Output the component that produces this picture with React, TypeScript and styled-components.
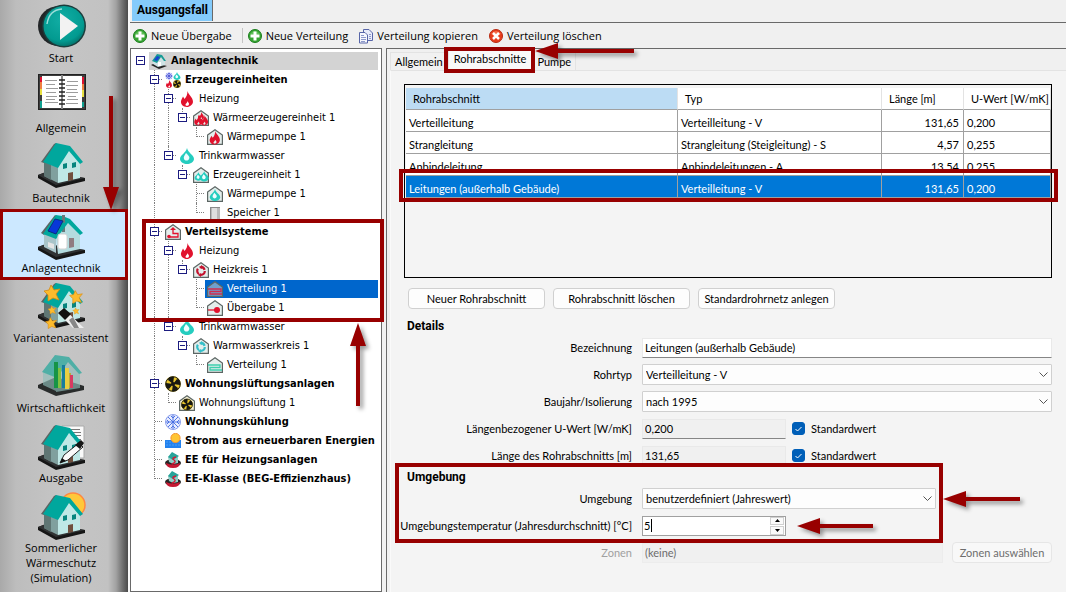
import React, { useState } from "react";
import styled, { createGlobalStyle, css } from "styled-components";

const RED = "#980000";
const TEAL = "#00a79d";
const UI = 'Lato, "Liberation Sans", Arial, sans-serif';
const HEADING = 'Roboto, "Liberation Sans", Arial, sans-serif';
const MENU = '"Open Sans", "Noto Sans", sans-serif';

const GlobalStyle = createGlobalStyle`
  * { box-sizing: border-box; }
  body { margin: 0; background: #f0f0f0; color: #000; font: 11px/15px ${UI}; }
  button, input, select { font: inherit; color: inherit; }
`;

const Shell = styled.div`
  display: flex;
  min-height: 100vh;
`;

/* ---------- navigation ---------- */

const Sidebar = styled.nav`
  position: relative;
  flex: 0 0 128px;
  background: linear-gradient(90deg, #a9a9a9 0, #bdbdbd 16px, #c5c5c5 60px, #c2c2c2 108px, #a2a2a2 116px, #6c6c6c 123px, #4a4a4a 128px);
`;

const NavButton = styled.button<{ $active?: boolean }>`
  display: flex;
  flex-direction: column;
  align-items: center;
  width: 100%;
  min-height: 70px;
  padding: 2px 6px 5px 0;
  border: 0;
  background: ${(p) => (p.$active ? "#cce8ff" : "transparent")};
  font: 11px/15px ${MENU};
  white-space: pre-line;
`;

const NavIcon = styled.svg`
  flex: none;
  width: 48px;
  height: 48px;
  margin-left: 2px;
`;

const MainArea = styled.main`
  position: relative;
  display: flex;
  flex: 1;
  flex-direction: column;
  min-width: 0;
  border-left: 2px solid #f8f8f8;
`;

const CaseTabs = styled.div`
  display: flex;
  height: 23px;
  padding-left: 2px;
  border-bottom: 1px solid #696969;
`;

const CaseTab = styled.button`
  height: 21px;
  padding: 0 4px 0 5px;
  border: 0;
  border-right: 1px solid #696969;
  background: #84cbfb;
  font: bold 12px/21px ${HEADING};
`;

const Toolbar = styled.div`
  display: flex;
  align-items: center;
  height: 25px;
  padding-left: 2px;
`;

const ToolButton = styled.button`
  display: flex;
  align-items: center;
  gap: 3px;
  padding: 0;
  margin-right: 10px;
  border: 0;
  background: none;
  font: 11px/16px ${MENU};
  white-space: nowrap;
`;

const ToolDivider = styled.span`
  width: 1px;
  height: 15px;
  margin-right: 4px;
  background: #c4c4c4;
`;

const Panes = styled.div`
  display: flex;
  flex: 1;
  gap: 4px;
`;

/* ---------- tree ---------- */

const TreePane = styled.section`
  position: relative;
  flex: 0 0 252px;
  padding: 2px 3px 0 1px;
  border: 1px solid #696969;
  background: #fff;
`;

const TreeList = styled.ul`
  margin: 0;
  padding: 0;
  list-style: none;
`;

const TreeRow = styled.li`
  display: flex;
  align-items: center;
  height: 19px;
  padding-left: 4px;
`;

const Guide = styled.span<{ $kind: "none" | "line" | "tee" | "elbow" }>`
  position: relative;
  flex: 0 0 14px;
  height: 19px;
  &::before {
    content: "";
    position: absolute;
    left: 4px;
    top: 0;
    height: ${(p) => (p.$kind === "elbow" ? "10px" : "19px")};
    border-left: ${(p) => (p.$kind === "none" ? "0" : "1px dotted #808080")};
  }
  &::after {
    content: "";
    position: absolute;
    left: 5px;
    top: 9px;
    width: 7px;
    border-top: ${(p) => (p.$kind === "tee" || p.$kind === "elbow" ? "1px dotted #808080" : "0")};
  }
`;

const Expander = styled.button`
  position: absolute;
  z-index: 1;
  left: 0;
  top: 5px;
  width: 9px;
  height: 9px;
  padding: 0;
  border: 1px solid #1c1c80;
  background: #fff;
  &::after {
    content: "";
    position: absolute;
    left: 1px;
    top: 3px;
    width: 5px;
    height: 1px;
    background: #1c1c80;
  }
`;

const NodeBody = styled.span<{ $tone?: "root" | "selected" }>`
  display: flex;
  flex: 1;
  align-items: center;
  gap: 4px;
  height: 18px;
  margin-left: -1px;
  padding-left: 2px;
  ${(p) => p.$tone === "root" && css`background: #d3d3d3;`}
  ${(p) => p.$tone === "selected" && css`background: #0066cc; color: #fff;`}
`;

const NodeLabel = styled.span<{ $bold?: boolean }>`
  font: ${(p) => (p.$bold ? "bold" : "normal")} 11px/18px "DejaVu Sans Condensed", "DejaVu Sans", sans-serif;
  white-space: nowrap;
`;

const SmallIcon = styled.svg`
  flex: none;
  width: 16px;
  height: 16px;
`;

/* ---------- detail pane ---------- */

const DetailPane = styled.section`
  flex: 1;
  min-width: 0;
  padding: 2px 0 0 3px;
  border-top: 1px solid #696969;
  border-left: 1px solid #696969;
`;

const TabStrip = styled.div`
  position: relative;
  display: flex;
  align-items: flex-end;
  height: 19px;
`;

const Tab = styled.button<{ $active?: boolean }>`
  height: ${(p) => (p.$active ? "21px" : "18px")};
  padding: ${(p) => (p.$active ? "0 5px 4px" : "0 4px 1px")};
  border: 1px solid #e3e3e3;
  border-bottom: 0;
  background: ${(p) => (p.$active ? "#f9f9f9" : "#f1f1f1")};
  line-height: 15px;
`;

const TabBody = styled.div`
  min-height: 100%;
  padding: 13px 14px 0 13px;
  border-top: 1px solid #e3e3e3;
  border-left: 1px solid #fafafa;
  background: #f4f4f4;
`;

const TableBox = styled.div`
  position: relative;
  height: 194px;
  padding: 3px 0 0 1px;
  border: 1px solid #000;
`;

const PipeTable = styled.table`
  width: 100%;
  table-layout: fixed;
  border-collapse: separate;
  border-spacing: 0;
`;

const HeadCell = styled.th<{ $sorted?: boolean; $w?: number }>`
  width: ${(p) => (p.$w ? `${p.$w}px` : "auto")};
  height: 22px;
  padding: 0 0 1px 7px;
  border-right: 1px solid #e3e3e3;
  border-bottom: 1px solid #a0a0a0;
  background: ${(p) => (p.$sorted ? "#bcdcf4" : "#fff")};
  font-weight: normal;
  text-align: left;
  white-space: nowrap;
`;

const Cell = styled.td<{ $right?: boolean; $selected?: boolean }>`
  height: 22px;
  padding: 4px 4px 0 3px;
  border-right: 1px solid #a0a0a0;
  border-bottom: 1px solid #a0a0a0;
  background: ${(p) => (p.$selected ? "#0078d7" : "#fff")};
  color: ${(p) => (p.$selected ? "#fff" : "#000")};
  text-align: ${(p) => (p.$right ? "right" : "left")};
  white-space: nowrap;
`;

const ButtonBar = styled.div`
  display: flex;
  gap: 8px;
  padding: 10px 4px 0;
`;

const PushButton = styled.button<{ $w: number }>`
  flex: 0 0 ${(p) => p.$w}px;
  height: 21px;
  padding: 0;
  border: 1px solid #d0d0d0;
  border-radius: 4px;
  background: #fdfdfd;
  line-height: 17px;
  white-space: nowrap;
  &:disabled { color: #6d6d6d; border-color: #e6e6e6; background: #f8f8f8; }
`;

const Group = styled.section<{ $gap: number }>`
  position: relative;
  padding-top: ${(p) => p.$gap}px;
`;

const GroupTitle = styled.h2`
  margin: 0 0 1px 3px;
  font: bold 12px/14px ${HEADING};
`;

const FormRow = styled.div`
  display: grid;
  grid-template-columns: 228px minmax(0, 1fr);
  column-gap: 10px;
  align-items: center;
  height: 27px;
`;

const FormLabel = styled.label<{ $dim?: boolean }>`
  justify-self: end;
  color: ${(p) => (p.$dim ? "#a0a0a0" : "#000")};
  white-space: nowrap;
`;

const FieldSlot = styled.div`
  display: flex;
  align-items: center;
`;

const TextInput = styled.input<{ $w?: number }>`
  flex: ${(p) => (p.$w ? `0 0 ${p.$w}px` : "1")};
  min-width: 0;
  height: 20px;
  padding: 0 2px 1px;
  border: 1px solid #e9e9e9;
  border-bottom-color: #868686;
  background: #fff;
  outline: 0;
  &:read-only { background: #f0f0f0; }
  &:disabled { background: #f0f0f0; color: #6d6d6d; border-color: #ececec; }
`;

const SelectWrap = styled.div<{ $inset?: boolean }>`
  position: relative;
  flex: 1;
  margin-right: ${(p) => (p.$inset ? "116px" : "0")};
`;

const Select = styled.select`
  display: block;
  width: 100%;
  height: 21px;
  padding: 0 3px;
  border: 1px solid #d0d0d0;
  border-radius: 1px;
  background: #fdfdfd;
  appearance: none;
  outline: 0;
`;

const Chevron = styled.svg`
  position: absolute;
  right: 4px;
  top: 8px;
  width: 9px;
  height: 6px;
  pointer-events: none;
`;

const CheckLabel = styled.label`
  position: relative;
  display: flex;
  align-items: center;
  gap: 6px;
  margin-left: 6px;
`;

const CheckBox = styled.input`
  width: 13px;
  height: 13px;
  margin: 0;
  border: 1px solid #868686;
  border-radius: 3px;
  appearance: none;
  &:checked { border-color: #005fb8; background: #005fb8; }
`;

const CheckMark = styled.svg`
  position: absolute;
  left: 3px;
  top: 5px;
  width: 7px;
  height: 6px;
  pointer-events: none;
`;

const Spinner = styled.div`
  position: relative;
  display: flex;
  width: 144px;
  height: 20px;
  padding: 0 1px;
  border: 1px solid #a0a0a0;
  background: #fff;
`;

const SpinInput = styled.input`
  flex: 1;
  min-width: 0;
  padding: 0 0 1px;
  border: 0;
  background: transparent;
  outline: 0;
`;

const Caret = styled.span`
  position: absolute;
  left: 8px;
  top: 2px;
  width: 1px;
  height: 13px;
  background: #000;
`;

const SpinButtons = styled.div`
  display: flex;
  flex-direction: column;
  width: 14px;
  gap: 1px;
`;

const SpinButton = styled.button`
  display: flex;
  flex: 1;
  align-items: center;
  justify-content: center;
  padding: 0;
  border: 1px solid #d0d0d0;
  background: #fafafa;
`;

/* ---------- callouts ---------- */

const Frame = styled.span<{ $t: number; $l: number; $r?: number; $w?: number; $h: number; $b?: number }>`
  position: absolute;
  z-index: 2;
  top: ${(p) => p.$t}px;
  left: ${(p) => p.$l}px;
  ${(p) => (p.$w ? `width: ${p.$w}px;` : `right: ${p.$r}px;`)}
  height: ${(p) => p.$h}px;
  border: ${(p) => p.$b ?? 4}px solid ${RED};
  pointer-events: none;
`;

const ArrowSvg = styled.svg<{ $x: number; $y: number }>`
  position: absolute;
  z-index: 3;
  left: ${(p) => p.$x}px;
  top: ${(p) => p.$y}px;
  overflow: visible;
  pointer-events: none;
  filter: drop-shadow(3px 3px 2px rgba(0, 0, 0, 0.4));
`;

type ArrowProps = { x: number; y: number; length: number; dir: "left" | "up" | "down" };

function Arrow({ x, y, length, dir }: ArrowProps) {
  const turn = { left: 0, up: 90, down: -90 }[dir];
  return (
    <ArrowSvg $x={x} $y={y} width="1" height="1" aria-hidden="true">
      <path transform={`rotate(${turn})`} fill={RED} d={`M0 0 23 -8V-2H${length}V2H23V8Z`} />
    </ArrowSvg>
  );
}

/* ---------- large icons ---------- */

const Base = () => (
  <>
    <path d="M0 33 8 30 47 36 47 39 18 46 0 36Z" fill="#161616" />
    <path d="M0 33 8 30 47 36 18 43Z" fill="#303233" />
  </>
);

function House() {
  return (
    <g>
      <Base />
      <path d="M6 19 20 25V41L6 34Z" fill="#80a09e" />
      <path d="M6 19 13 22V38L6 34Z" fill="#5f7674" />
      <path d="M20 25 30 8 42 21V36L20 41Z" fill="#bfe8e6" />
      <path d="M3 20 16 2 18 1 19 3 6 21Z" fill="#5c6463" />
      <path d="M5 20 18 1 32 4 45 20 42 22 31 9 20 26Z" fill={TEAL} />
      <path d="M25 22 29 21V26L25 27ZM34 21 38 20V25L34 26Z" fill="#06857e" />
      <path d="M30 31 35 30V38L30 39Z" fill="#70503f" />
    </g>
  );
}

const Star = ({ x, y, s }: { x: number; y: number; s: number }) => (
  <path
    transform={`translate(${x} ${y}) scale(${s})`}
    d="M-1-8 2-3 8-4 4 1 7 7 1 5-4 8-4 2-8-2-3-3Z"
    fill="#fdbb2d"
    stroke="#d88b10"
    strokeWidth=".8"
  />
);

const bigIcons: Record<string, React.ReactNode> = {
  start: (
    <>
      <defs>
        <radialGradient id="play" cx=".45" cy=".35" r=".7">
          <stop offset="0" stopColor="#12aea5" />
          <stop offset=".75" stopColor="#029a90" />
          <stop offset="1" stopColor="#046a64" />
        </radialGradient>
      </defs>
      <ellipse cx="21" cy="24" rx="21" ry="20" fill="#222527" />
      <ellipse cx="26" cy="24" rx="22" ry="21.500" fill="#1c3d3c" />
      <ellipse cx="26" cy="24" rx="20.500" ry="20" fill="url(#play)" />
      <path d="M9 22Q11 8 24 7" fill="none" stroke="#9addd9" strokeWidth="1.500" />
      <path d="M22 11V38L40 24Z" fill="#f2f2f2" />
    </>
  ),
  book: (
    <g transform="translate(0 2)">
      <rect x=".5" y=".5" width="47" height="35" fill="#3c3c3c" stroke="#222" />
      <path d="M2 3H4V8H2ZM44 3H46V10H44Z" fill="#e01030" />
      <path d="M2 8H4V15H2ZM44 10H46V16H44Z" fill="#f08040" />
      <path d="M2 15H4V21H2ZM44 16H46V23H44Z" fill="#e8e040" />
      <path d="M2 27H4V34H2ZM44 28H46V33H44Z" fill="#10a090" />
      <path d="M4 2H23V34H4ZM25 2H44V34H25Z" fill="#fff" />
      <path d="M7 6.500H19M8 10.500H17M8 14.500H20M8 18.500H18M8 22.500H19M8 25.500H17M7 28.500H20M29 7.500H40M28 11.500H40M29 15.500H39M28 18.500H40M30 22.500H38M29 25.500H40M28 29.500H40" stroke="#9c9c9c" />
      <path d="M24 1V35" stroke="#888" strokeWidth="2" />
      <path d="M21 6H27M21 10H27M21 14H27M21 18H27M21 22H27M21 26H27M21 30H27" stroke="#222" strokeWidth="1.500" />
    </g>
  ),
  house: <House />,
  plant: (
    <g transform="translate(0 2)">
      <Base />
      <path d="M6 18 18 24V39L6 33Z" fill="#a9c4c9" />
      <path d="M18 24 30 9 42 21V35L20 40Z" fill="#b4dcdf" />
      <path d="M24 1H27V18H24Z" fill="#69777a" />
      <path d="M31 24H36V33L31 34Z" fill="#8f7d80" />
      <path d="M10 28 16 30V35L10 33Z" fill="#e5e5e5" />
      <path d="M3 19 17 1 19 2 6 21Z" fill="#5c6463" />
      <path d="M5 20 18 1 24 2 24 8 27 9V3L32 5 45 19 42 21 30 9 18 25Z" fill={TEAL} />
      <path d="M10 17 17 5 25 7 18 20Z" fill="#0837d8" stroke="#07327a" />
      <rect x="20" y="20" width="9" height="15" rx="2" fill="#fff" stroke="#d1d1d1" />
    </g>
  ),
  wizard: (
    <>
      <House />
      <path d="M20 31 25 26 46 46H35Z" fill="#eee" />
      <path d="M20 31 26 26 33 32 27 38Z" fill="#111" />
      <path d="M31 38 35 35 41 46H36Z" fill="#888" />
      <Star x={14} y={11} s={1} />
      <Star x={38} y={15} s={0.8} />
      <Star x={14} y={28} s={0.5} />
      <Star x={38} y={29} s={0.4} />
      <Star x={13} y={41} s={0.7} />
    </>
  ),
  economy: (
    <>
      <path d="M0 33 18 25 46 34 46 38 18 44 0 36Z" fill="#292c2c" />
      <path d="M5 20 18 25V39L5 33ZM18 25 30 9 42 21V36L18 40Z" fill="#8fbdb8" opacity=".65" />
      <path d="M4 20 17 3 31 5 44 21 41 22 30 10 19 26Z" fill="#4fafa6" />
      <path d="M16 10H20V36H16Z" fill="#169447" />
      <path d="M20 16H23V36H20Z" fill="#7dc142" />
      <path d="M24 13H27V36H24Z" fill="#167e9c" />
      <path d="M27 16H31V37H27Z" fill="#e9cf42" />
      <path d="M31 21H33V36H31Z" fill="#bda838" />
      <path d="M32 23H35V36H32Z" fill="#d83b62" />
    </>
  ),
  report: (
    <>
      <path d="M24 4H46V36H24Z" fill="#fafafa" stroke="#aaa" />
      <path d="M27 7.500H42M27 10.500H43M30 13.500H43M34 17.500H43M36 21.500H43" stroke="#777" />
      <g transform="translate(0 2)"><House /></g>
      <path d="M22 41 26 33 41 21 45 25 30 38Z" fill="#fafafa" stroke="#222" />
      <path d="M37 23 43 18 46 21 42 27Z" fill="#151515" />
      <path d="M22 41 24 36 28 39Z" fill="#111" />
    </>
  ),
  summer: (
    <>
      <circle cx="35" cy="13" r="12" fill="#ffc83a" stroke="#ff8740" strokeWidth="1.500" />
      <g transform="translate(0 2)"><House /></g>
    </>
  ),
};

const navItems = [
  { icon: "start", label: "Start" },
  { icon: "book", label: "Allgemein" },
  { icon: "house", label: "Bautechnik" },
  { icon: "plant", label: "Anlagentechnik" },
  { icon: "wizard", label: "Variantenassistent" },
  { icon: "economy", label: "Wirtschaftlichkeit" },
  { icon: "report", label: "Ausgabe" },
  { icon: "summer", label: "Sommerlicher\nWärmeschutz\n(Simulation)" },
];

/* ---------- small icons ---------- */

const Hut = ({ fill = "#e4eeec" }: { fill?: string }) => (
  <path d="M.600 6 8 .800 15.400 6V15.400H.600Z" fill={fill} stroke="#5c6664" strokeWidth="1.200" />
);
const FLAME = "M8.500 0C9.500 4 14 6 14 11 13.500 14.500 10 16 8 16 4 16 1.500 13 2 10 2.500 8 3.500 7 4 5.500L5.500 8C7.500 6 8.500 3 8.500 0ZM8 10C9 12 6.500 12 6.500 14 7 15.500 10 15 10 13 10 12 9 11 8 10Z";
const DROP = "M8 0C9 5 15 7 15 11 15 14 11 16 8 16S1 14 1 11C1 7 7 5 8 0Z";
const Flake = ({ c = "#4169e1" }: { c?: string }) => (
  <path d="M8 1V15M1 8H15M3 3 13 13M13 3 3 13M6 2 8 4 10 2M6 14 8 12 10 14M2 6 4 8 2 10M14 6 12 8 14 10" stroke={c} fill="none" strokeWidth=".9" />
);
const Fan = () => (
  <>
    <circle cx="8" cy="8" r="7.800" fill="#e8c52c" />
    <path d="M8 8 3 4Q4 0 9 1ZM8 8 12 3Q16 4 15 9ZM8 8 13 12Q12 16 7 15ZM8 8 4 13Q0 12 1 7Z" fill="#171711" />
    <circle cx="8" cy="8" r="7.300" fill="none" stroke="#171711" />
    <circle cx="8" cy="8" r="2" fill="#171711" />
  </>
);
const Cycle = ({ c }: { c: string }) => (
  <>
    <circle cx="8" cy="9" r="3.800" fill="none" stroke={c} strokeWidth="2.200" strokeDasharray="6 2" />
    <path d="M8 3 11 5 8 7ZM8 11 5 13 8 15Z" fill={c} />
  </>
);
const Drop = () => (
  <>
    <path d={DROP} fill="#25cdbf" />
    <path d="M7 5C10 8 11 9 10 11 9 13 6 13 5 11 4 9 6 7 7 5Z" fill="#effcff" />
  </>
);

const Saver = () => (
  <>
    <ellipse cx="8" cy="11" rx="8" ry="3.800" fill="#252525" />
    <path d="M1 11Q8 14 15 11 15 16 8 16 1 16 1 11Z" fill="#c51933" />
    <path d="M3 5 8 1 13 5V11L8 12 4 10Z" fill="#8fcfc8" />
    <path d="M3 5 7 0 14 4 8 8Z" fill="#27a39a" />
    <path d="M11 5Q6 6 9 8T7 12" fill="none" stroke="#d51933" strokeWidth="1.500" />
  </>
);

const smallIcons: Record<string, React.ReactNode> = {
  root: (
    <>
      <path d="M0 12 4 10 16 13 8 16Z" fill="#252525" />
      <path d="M2 8 6 8 10 5 14 8V12L7 14 2 11Z" fill="#cfe3e5" />
      <path d="M1 8 6 1 11 2 15 8 13 8 10 4 6 10Z" fill="#189c96" />
      <path d="M3 7 6 3 9 4 6 8Z" fill="#1746cf" />
      <path d="M7 9H10V13H7Z" fill="#fff" />
    </>
  ),
  mix: (
    <>
      <g transform="scale(.5)"><circle cx="8" cy="8" r="7" fill="#c9cffa" /><Flake c="#1a26c8" /></g>
      <g transform="translate(8) scale(.5)"><Drop /></g>
      <g transform="translate(0 8) scale(.5)"><path d={FLAME} fill="#e1122d" /></g>
      <g transform="translate(8 8) scale(.5)"><Fan /></g>
    </>
  ),
  flame: <path d={FLAME} fill="#e1122d" fillRule="evenodd" />,
  drop: <Drop />,
  heatUnit: (
    <>
      <Hut />
      <g fill="#e1122d" fillRule="evenodd">
        <path transform="translate(4 2) scale(.5)" d={FLAME} />
        <path transform="translate(0 5) scale(.65)" d={FLAME} />
        <path transform="translate(6 5) scale(.65)" d={FLAME} />
      </g>
    </>
  ),
  heatPump: <><Hut /><path transform="translate(1 2) scale(.85)" d={FLAME} fill="#e1122d" fillRule="evenodd" /></>,
  waterUnit: (
    <>
      <Hut />
      <g transform="translate(1 5) scale(.55)"><Drop /></g>
      <g transform="translate(6 4) scale(.65)"><Drop /></g>
    </>
  ),
  waterPump: <><Hut /><g transform="translate(2 3) scale(.75)"><Drop /></g></>,
  tank: (
    <>
      <rect x="3" y="2" width="10" height="14" fill="#b9b9b9" />
      <path d="M5 3H10V16H5Z" fill="#dedede" />
      <path d="M3 2.500H13M3.500 16V2" stroke="#8a8a8a" fill="none" />
    </>
  ),
  dist: (
    <>
      <Hut />
      <path d="M4 13H13V9.500H8V5" fill="none" stroke="#e1122d" strokeWidth="1.300" />
      <path d="M5 6 8 3 11 6Z" fill="#e1122d" />
      <circle cx="4" cy="12.500" r="1.800" fill="#e1122d" />
    </>
  ),
  heatLoop: <><Hut /><Cycle c="#c2122d" /></>,
  waterLoop: <><Hut /><Cycle c="#35bfc9" /></>,
  pipesHot: <><Hut fill="#6fa0cc" /><path d="M1 8H14V10.500H3V13H15" fill="none" stroke="#d12b4e" strokeWidth="1.300" /></>,
  pipesWater: <><Hut /><path d="M1 8H13V10.500H3V13H15" fill="none" stroke="#3ccfae" strokeWidth="1.300" /></>,
  handover: <><Hut /><path d="M1 10H8" stroke="#e1122d" strokeWidth="1.300" /><circle cx="10" cy="10" r="3" fill="#e1122d" /></>,
  fan: <Fan />,
  fanHut: <><Hut fill="#f5f1d8" /><g transform="translate(2 3.500) scale(.75)"><Fan /></g></>,
  flake: <><circle cx="8" cy="8" r="7.500" fill="#e8edff" stroke="#6f88e6" strokeWidth=".8" /><Flake /></>,
  solar: (
    <>
      <path d="M0 7H16V15H0Z" fill="#2382ef" />
      <path d="M1 9H15M1 12H15" stroke="#4a9df5" strokeDasharray="2 1" />
      <circle cx="10.500" cy="5" r="4.600" fill="#ffc533" stroke="#f49331" />
    </>
  ),
  saver: <Saver />,
};

type Node = { level: number; icon: string; label: string; bold?: boolean; open?: boolean; selected?: boolean };

const nodes: Node[] = [
  { level: 0, icon: "root", label: "Anlagentechnik", bold: true, open: true },
  { level: 1, icon: "mix", label: "Erzeugereinheiten", bold: true, open: true },
  { level: 2, icon: "flame", label: "Heizung", open: true },
  { level: 3, icon: "heatUnit", label: "Wärmeerzeugereinheit 1", open: true },
  { level: 4, icon: "heatPump", label: "Wärmepumpe 1" },
  { level: 2, icon: "drop", label: "Trinkwarmwasser", open: true },
  { level: 3, icon: "waterUnit", label: "Erzeugereinheit 1", open: true },
  { level: 4, icon: "waterPump", label: "Wärmepumpe 1" },
  { level: 4, icon: "tank", label: "Speicher 1" },
  { level: 1, icon: "dist", label: "Verteilsysteme", bold: true, open: true },
  { level: 2, icon: "flame", label: "Heizung", open: true },
  { level: 3, icon: "heatLoop", label: "Heizkreis 1", open: true },
  { level: 4, icon: "pipesHot", label: "Verteilung 1", selected: true },
  { level: 4, icon: "handover", label: "Übergabe 1" },
  { level: 2, icon: "drop", label: "Trinkwarmwasser", open: true },
  { level: 3, icon: "waterLoop", label: "Warmwasserkreis 1", open: true },
  { level: 4, icon: "pipesWater", label: "Verteilung 1" },
  { level: 1, icon: "fan", label: "Wohnungslüftungsanlagen", bold: true, open: true },
  { level: 2, icon: "fanHut", label: "Wohnungslüftung 1" },
  { level: 1, icon: "flake", label: "Wohnungskühlung", bold: true },
  { level: 1, icon: "solar", label: "Strom aus erneuerbaren Energien", bold: true },
  { level: 1, icon: "saver", label: "EE für Heizungsanlagen", bold: true },
  { level: 1, icon: "saver", label: "EE-Klasse (BEG-Effizienzhaus)", bold: true },
];

/* True when another node of the given level follows under the same parent. */
function continues(index: number, level: number) {
  const next = nodes.slice(index + 1).find((n) => n.level <= level);
  return next !== undefined && next.level === level;
}

function guideKind(index: number, level: number) {
  if (level === 0) return "none";
  const more = continues(index, level);
  if (level === nodes[index].level) return more ? "tee" : "elbow";
  return more ? "line" : "none";
}

function Tree() {
  return (
    <TreePane aria-label="Anlagenstruktur">
      <TreeList>
        {nodes.map((n, i) => (
          <TreeRow key={i}>
            {Array.from({ length: n.level + 1 }, (_, l) => (
              <Guide key={l} $kind={guideKind(i, l)}>
                {l === n.level && n.open && <Expander aria-label={`${n.label} zuklappen`} />}
              </Guide>
            ))}
            <NodeBody $tone={n.level === 0 ? "root" : n.selected ? "selected" : undefined}>
              <SmallIcon viewBox="0 0 16 16" aria-hidden="true">{smallIcons[n.icon]}</SmallIcon>
              <NodeLabel $bold={n.bold}>{n.label}</NodeLabel>
            </NodeBody>
          </TreeRow>
        ))}
      </TreeList>
      <Frame $t={170} $l={11} $r={-3} $h={103} />
      <Arrow x={227} y={274} length={83} dir="up" />
    </TreePane>
  );
}

const AddIcon = () => (
  <SmallIcon viewBox="0 0 16 16" aria-hidden="true">
    <circle cx="8" cy="8" r="6.500" fill="#36a532" stroke="#1c7d1e" />
    <path d="M3 6Q8 0 13 6Q8 8 3 6Z" fill="#7bd070" opacity=".6" />
    <path d="M6.500 3.500H9.500V6.500H12.500V9.500H9.500V12.500H6.500V9.500H3.500V6.500H6.500Z" fill="#fff" />
  </SmallIcon>
);

const CopyIcon = () => (
  <SmallIcon viewBox="0 0 16 16" aria-hidden="true">
    <path d="M5.500 1.500H11L14.500 5V12.500H5.500Z" fill="#e9ecfa" stroke="#5866a8" />
    <path d="M1.500 4.500H7L9.500 7V15H1.500Z" fill="#f6f7fd" stroke="#5866a8" />
    <path d="M3 7.500H6M3 9.500H8M3 11.500H8M3 13.500H7M11 6.500H13M11 8.500H13M11 10.500H13" stroke="#8e99cb" />
  </SmallIcon>
);

const DeleteIcon = () => (
  <SmallIcon viewBox="0 0 16 16" aria-hidden="true">
    <circle cx="8" cy="8" r="6.500" fill="#e73d1d" stroke="#b82a12" />
    <path d="M3 6Q8 0 13 6Q8 8 3 6Z" fill="#ff8c69" opacity=".6" />
    <path d="M5 5 11 11M11 5 5 11" stroke="#fff" strokeWidth="2.500" />
  </SmallIcon>
);

const DropArrow = () => (
  <Chevron viewBox="0 0 9 6" aria-hidden="true">
    <path d="M.500.500 4.500 4.500 8.500.500" fill="none" stroke="#555" />
  </Chevron>
);

function Dropdown({ id, value, inset }: { id: string; value: string; inset?: boolean }) {
  return (
    <SelectWrap $inset={inset}>
      <Select id={id} defaultValue={value}><option>{value}</option></Select>
      <DropArrow />
    </SelectWrap>
  );
}

function StandardCheck() {
  const [on, setOn] = useState(true);
  return (
    <CheckLabel>
      <CheckBox type="checkbox" checked={on} onChange={(e) => setOn(e.target.checked)} />
      {on && (
        <CheckMark viewBox="0 0 7 6" aria-hidden="true">
          <path d="M.500 3 2.500 5 6.500 1" fill="none" stroke="#fff" />
        </CheckMark>
      )}
      Standardwert
    </CheckLabel>
  );
}

const pipes = [
  ["Verteilleitung", "Verteilleitung - V", "131,65", "0,200"],
  ["Strangleitung", "Strangleitung (Steigleitung) - S", "4,57", "0,255"],
  ["Anbindeleitung", "Anbindeleitungen - A", "13,54", "0,255"],
  ["Leitungen (außerhalb Gebäude)", "Verteilleitung - V", "131,65", "0,200"],
];

function PipeSections() {
  const [temp, setTemp] = useState("5");
  const step = (d: number) => setTemp(String(Number(temp) + d));
  return (
    <TabBody>
      <TableBox>
        <PipeTable>
          <thead>
            <tr>
              <HeadCell $sorted>Rohrabschnitt</HeadCell>
              <HeadCell $w={204}>Typ</HeadCell>
              <HeadCell $w={82}>Länge [m]</HeadCell>
              <HeadCell $w={87}>U-Wert [W/mK]</HeadCell>
            </tr>
          </thead>
          <tbody>
            {pipes.map((row, r) => (
              <tr key={r}>
                {row.map((v, c) => (
                  <Cell key={c} $right={c === 2} $selected={r === 3}>{v}</Cell>
                ))}
              </tr>
            ))}
          </tbody>
        </PipeTable>
        <Frame $t={84} $l={-6} $r={-7} $h={33} />
      </TableBox>
      <ButtonBar>
        <PushButton $w={137}>Neuer Rohrabschnitt</PushButton>
        <PushButton $w={137}>Rohrabschnitt löschen</PushButton>
        <PushButton $w={137}>Standardrohrnetz anlegen</PushButton>
      </ButtonBar>

      <Group $gap={10}>
        <GroupTitle>Details</GroupTitle>
        <FormRow>
          <FormLabel htmlFor="name">Bezeichnung</FormLabel>
          <FieldSlot><TextInput id="name" defaultValue="Leitungen (außerhalb Gebäude)" /></FieldSlot>
        </FormRow>
        <FormRow>
          <FormLabel htmlFor="type">Rohrtyp</FormLabel>
          <FieldSlot><Dropdown id="type" value="Verteilleitung - V" /></FieldSlot>
        </FormRow>
        <FormRow>
          <FormLabel htmlFor="year">Baujahr/Isolierung</FormLabel>
          <FieldSlot><Dropdown id="year" value="nach 1995" /></FieldSlot>
        </FormRow>
        <FormRow>
          <FormLabel htmlFor="uvalue">Längenbezogener U-Wert [W/mK]</FormLabel>
          <FieldSlot><TextInput id="uvalue" $w={144} readOnly value="0,200" /><StandardCheck /></FieldSlot>
        </FormRow>
        <FormRow>
          <FormLabel htmlFor="length">Länge des Rohrabschnitts [m]</FormLabel>
          <FieldSlot><TextInput id="length" $w={144} readOnly value="131,65" /><StandardCheck /></FieldSlot>
        </FormRow>
      </Group>

      <Group $gap={1}>
        <GroupTitle>Umgebung</GroupTitle>
        <FormRow>
          <FormLabel htmlFor="env">Umgebung</FormLabel>
          <FieldSlot><Dropdown id="env" value="benutzerdefiniert (Jahreswert)" inset /></FieldSlot>
        </FormRow>
        <FormRow>
          <FormLabel htmlFor="temp">Umgebungstemperatur (Jahresdurchschnitt) [°C]</FormLabel>
          <FieldSlot>
            <Spinner>
              <SpinInput id="temp" value={temp} onChange={(e) => setTemp(e.target.value)} />
              <Caret />
              <SpinButtons>
                <SpinButton aria-label="Erhöhen" onClick={() => step(1)}>
                  <svg width="5" height="3" aria-hidden="true"><path d="M0 3 2.500 0 5 3Z" /></svg>
                </SpinButton>
                <SpinButton aria-label="Verringern" onClick={() => step(-1)}>
                  <svg width="5" height="3" aria-hidden="true"><path d="M0 0 2.500 3 5 0Z" /></svg>
                </SpinButton>
              </SpinButtons>
            </Spinner>
          </FieldSlot>
        </FormRow>
        <FormRow>
          <FormLabel htmlFor="zones" $dim>Zonen</FormLabel>
          <ZoneSlot>
            <TextInput id="zones" disabled value="(keine)" />
            <PushButton $w={100} disabled>Zonen auswählen</PushButton>
          </ZoneSlot>
        </FormRow>
        <Frame $t={-6} $l={-9} $r={109} $h={80} />
      </Group>
    </TabBody>
  );
}

const ZoneSlot = styled(FieldSlot)`
  gap: 9px;
`;

export default function App() {
  return (
    <Shell>
      <GlobalStyle />
      <Sidebar aria-label="Bereiche">
        {navItems.map((n) => (
          <NavButton key={n.icon} $active={n.icon === "plant"}>
            <NavIcon viewBox="0 0 48 48" aria-hidden="true">{bigIcons[n.icon]}</NavIcon>
            {n.label}
          </NavButton>
        ))}
        <Frame $t={209} $l={0} $r={0} $h={71} $b={3} />
        <Arrow x={111} y={210} length={114} dir="down" />
      </Sidebar>
      <MainArea>
        <CaseTabs><CaseTab>Ausgangsfall</CaseTab></CaseTabs>
        <Toolbar>
          <ToolButton><AddIcon />Neue Übergabe</ToolButton>
          <ToolDivider />
          <ToolButton><AddIcon />Neue Verteilung</ToolButton>
          <ToolButton><CopyIcon />Verteilung kopieren</ToolButton>
          <ToolButton><DeleteIcon />Verteilung löschen</ToolButton>
        </Toolbar>
        <Panes>
          <Tree />
          <DetailPane>
            <TabStrip>
              <Tab>Allgemein</Tab>
              <Tab $active>Rohrabschnitte</Tab>
              <Tab>Pumpe</Tab>
              <Frame $t={-4} $l={54} $w={91} $h={26} />
              <Arrow x={145} y={0} length={99} dir="left" />
            </TabStrip>
            <PipeSections />
          </DetailPane>
        </Panes>
        <Arrow x={813} y={499} length={77} dir="left" />
        <Arrow x={667} y={526} length={76} dir="left" />
      </MainArea>
    </Shell>
  );
}
